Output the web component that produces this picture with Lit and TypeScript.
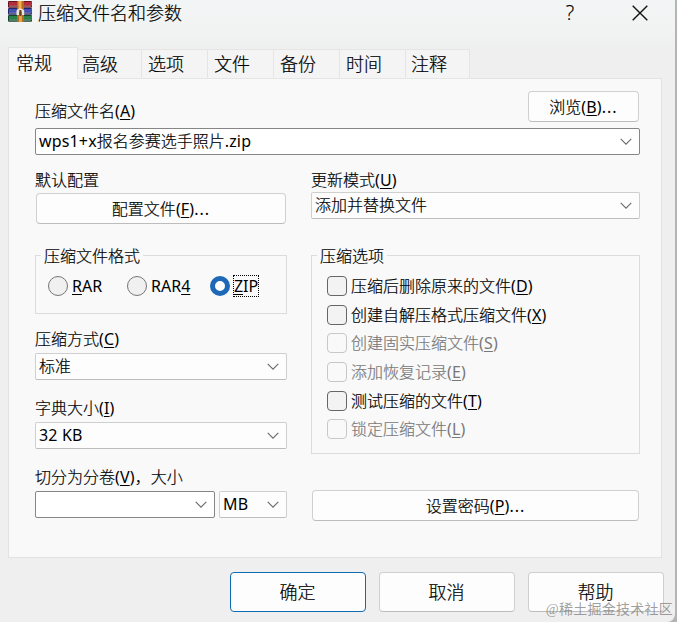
import { LitElement, html, css, svg, nothing } from "lit";
import { customElement, property } from "lit/decorators.js";
import { classMap } from "lit/directives/class-map.js";

const keyed = (text: string, key?: string, tail = "") =>
  html`${text}${key ? html`<span class="latin">(<u>${key}</u>)</span>` : nothing}${tail === "..." ? html`<span class="latin dots">...</span>` : tail}`;

const latinRuns = (text: string) =>
  text.split(/([\x20-\x7e]+)/).filter(Boolean).map((run) => /^[\x20-\x7e]/.test(run) ? html`<span class="latin">${run}</span>` : run);

const latinStyles = css`
  .latin { font-weight: 400; -webkit-text-stroke: 0; letter-spacing: .15px; }
  .dots { letter-spacing: 1px; }
`;

@customElement("combo-box")
class ComboBox extends LitElement {
  @property() value = "";
  @property({ type: Boolean }) editable = false;

  static styles = [latinStyles, css`
    :host { display: block; }
    .box {
      box-sizing: border-box; height: 27px; display: flex; align-items: center;
      justify-content: space-between; padding: 0 7px 0 3px; background: #fdfdfd;
      border: 1px solid #cfcfcf; border-bottom-color: #bdbdbd; border-radius: 2px;
      line-height: 25px; white-space: nowrap;
    }
    .editable { border-color: #868686; background: #fff; }
    svg { width: 12px; height: 7px; flex: none; }
    path { fill: none; stroke: #6a6a6a; stroke-width: 1.1; }
  `];

  render() {
    return html`<div class=${classMap({ box: true, editable: this.editable })}>
      <span>${latinRuns(this.value)}</span>
      <svg viewBox="0 0 12 7"><path d="M.7 .8 6 6.1 11.3 .8" /></svg>
    </div>`;
  }
}

@customElement("app-root")
class AppRoot extends LitElement {
  static styles = [latinStyles, css`
    * { box-sizing: border-box; }
    :host {
      display: block; width: 677px; height: 622px; overflow: hidden; background: #b4b4b4;
      font: 300 16px/24px "Noto Sans", "Noto Sans CJK SC", sans-serif; color: #000;
      -webkit-text-stroke: .2px;
    }
    u { text-decoration-thickness: 1px; text-underline-offset: 2px; text-decoration-skip-ink: none; }
    .window {
      position: relative; width: 675px; height: 622px; border-radius: 0 0 8px 0;
      background: linear-gradient(#f2f5f5 0, #f2f4f4 24px, #efefef 50px);
    }
    .titlebar { display: flex; align-items: center; height: 26px; padding: 0 27px 0 8px; font-size: 18px; font-family: "Noto Sans CJK SC", sans-serif; }
    .logo { width: 24px; height: 21px; margin: -3px 6px 0 0; }
    .title { flex: 1; margin-top: -2px; }
    .help { width: 10px; margin-right: 57px; text-align: center; font: 300 20px/24px "Open Sans", sans-serif; }
    .close { width: 16px; height: 16px; }
    .close path { fill: none; stroke: #111; stroke-width: 1.4; }
    .tabs { display: flex; align-items: flex-end; height: 53px; padding-left: 8px; margin-bottom: -1px; font: 300 18px/28px "Noto Sans CJK SC", sans-serif; }
    .tab { width: 66px; height: 30px; padding-left: 6px; line-height: 27px; background: #f4f4f4; border: 1px solid #e5e5e5; border-left: 0; }
    .tab:nth-child(2) { width: 64px; padding-left: 4px; }
    .tab.last { width: 64px; padding-left: 5px; }
    .tab.active { position: relative; width: 70px; height: 32px; padding-left: 7px; line-height: 28px; background: #f9f9f9; border-left: 1px solid #e5e5e5; border-bottom: 0; }
    .panel { width: 654px; height: 480px; margin-left: 8px; padding: 12px 21px 0 26px; background: #f9f9f9; border: 1px solid #e2e2e2; }
    .namerow { display: flex; justify-content: space-between; height: 37px; padding-right: 1px; }
    .namerow .label { margin-top: 8px; }
    .label { height: 24px; white-space: nowrap; }
    .button {
      display: flex; align-items: center; justify-content: center; height: 31px;
      border: 1px solid #d0d0d0; border-bottom-color: #bdbdbd; border-radius: 4px; background: #fdfdfd;
    }
    .browse { width: 111px; }
    .columns { display: flex; justify-content: space-between; padding-top: 13px; }
    .left { width: 252px; }
    .right { width: 329px; }
    .profile { margin: 1px 1px 31px 1px; }
    .group { border: 1px solid #dcdcdc; }
    .legend { width: max-content; height: 24px; margin: -12px 0 0 5px; padding: 0 3px; background: #f9f9f9; }
    .formats { height: 59px; margin-bottom: 13px; }
    .radios { display: flex; align-items: center; height: 24px; margin: 6px 0 0 12px; font-weight: 400; -webkit-text-stroke: 0; }
    .radio { width: 20px; height: 20px; margin-right: 4px; border: 1px solid #757575; border-radius: 50%; background: #f0f0f0; }
    .radio.on { border: 5px solid #1d69b8; background: #fff; margin-right: 3px; }
    .rar { width: 55px; }
    .rar4 { width: 59px; }
    .focused { height: 22px; line-height: 20px; width: 26px; border: 1px dotted #000; display: flex; justify-content: center; }
    .method { margin: 2px 0 16px; }
    .sizes { display: flex; gap: 4px; }
    .volume { width: 180px; }
    .unit { width: 68px; }
    .options { height: 199px; margin: 36px 0; }
    .choices { margin: 4px 0 0 15px; }
    .choice { display: flex; align-items: center; height: 28.6px; }
    .check { width: 20px; height: 20px; margin-right: 4px; border: 1px solid #666; border-radius: 4px; background: #f3f3f3; }
    .disabled { color: #787878; }
    .disabled .check { border-color: #c8c8c8; background: #f9f9f9; }
    .password { margin: 0 1px; }
    .actions { display: flex; justify-content: flex-end; gap: 13px; padding: 14px 11px 0 0; font: 300 18px/28px "Noto Sans CJK SC", sans-serif; }
    .actions .button { width: 136px; height: 40px; padding: 0 1px 2px 0; }
    .actions .primary { border-color: #0f6cb3; }
    .watermark {
      position: absolute; right: 2px; bottom: 0; white-space: nowrap; color: rgba(110, 110, 110, .66);
      font: 14px/24px "Liberation Serif", "Noto Sans CJK SC", serif; letter-spacing: .25px; -webkit-text-stroke: 0;
    }
  `];

  private options = [
    { text: "压缩后删除原来的文件", key: "D" },
    { text: "创建自解压格式压缩文件", key: "X" },
    { text: "创建固实压缩文件", key: "S", disabled: true },
    { text: "添加恢复记录", key: "E", disabled: true },
    { text: "测试压缩的文件", key: "T" },
    { text: "锁定压缩文件", key: "L", disabled: true },
  ];

  private logo() {
    const book = (y: number, fill: string, dark: string) => svg`
      <rect x="0" y=${y} width="24" height="6.8" rx="1" fill=${dark} />
      <rect x="1" y=${y + 1} width="23" height="4" fill=${fill} />
      <rect x="1" y=${y + 4.8} width="22" height=".7" fill="#a9a6a4" />`;
    return html`<svg class="logo" viewBox="0 0 24 21">
      ${book(0, "#b52c3c", "#671421")}${book(7, "#4350b5", "#232967")}${book(14, "#27834a", "#12452b")}
      <rect x="9" width="7" height="21" fill="#b66a24" />
      <rect x="10.5" width="3" height="8" fill="#f0b34c" />
      <rect x="11" y="14" width="3" height="7" fill="#e2a344" />
      <path d="M8.5 14V9.5Q12.3 5.5 16.2 9.5V14H13.8V10.5H11V14Z" fill="#eee6d5" />
      <rect x="11.4" y="9" width="2" height="6" fill="#6c411d" />
    </svg>`;
  }

  render() {
    const tabs = ["常规", "高级", "选项", "文件", "备份", "时间", "注释"];
    return html`<div class="window">
      <div class="titlebar">
        ${this.logo()}
        <span class="title">压缩文件名和参数</span>
        <span class="help">?</span>
        <svg class="close" viewBox="0 0 16 16"><path d="M.7 .7 15.3 15.3M15.3 .7 .7 15.3" /></svg>
      </div>
      <div class="tabs">
        ${tabs.map((t, i) => html`<div class=${classMap({ tab: true, active: i === 0, last: i === 6 })}>${t}</div>`)}
      </div>
      <div class="panel">
        <div class="namerow">
          <div class="label">${keyed("压缩文件名", "A")}</div>
          <div class="button browse"><span>${keyed("浏览", "B", "...")}</span></div>
        </div>
        <combo-box editable value="wps1+x报名参赛选手照片.zip"></combo-box>
        <div class="columns">
          <div class="left">
            <div class="label">默认配置</div>
            <div class="button profile"><span>${keyed("配置文件", "F", "...")}</span></div>
            <div class="group formats">
              <div class="legend">压缩文件格式</div>
              <div class="radios">
                <span class="radio"></span><span class="rar"><u>R</u>AR</span>
                <span class="radio"></span><span class="rar4">RAR<u>4</u></span>
                <span class="radio on"></span><span class="focused"><span><u>Z</u>IP</span></span>
              </div>
            </div>
            <div class="label">${keyed("压缩方式", "C")}</div>
            <combo-box class="method" value="标准"></combo-box>
            <div class="label">${keyed("字典大小", "I")}</div>
            <combo-box class="method" value="32 KB"></combo-box>
            <div class="label">${keyed("切分为分卷", "V", "，大小")}</div>
            <div class="sizes method">
              <combo-box class="volume" editable></combo-box>
              <combo-box class="unit" value="MB"></combo-box>
            </div>
          </div>
          <div class="right">
            <div class="label">${keyed("更新模式", "U")}</div>
            <combo-box value="添加并替换文件"></combo-box>
            <div class="group options">
              <div class="legend">压缩选项</div>
              <div class="choices">
                ${this.options.map((o) => html`<div class=${classMap({ choice: true, disabled: !!o.disabled })}>
                  <span class="check"></span><span>${keyed(o.text, o.key)}</span>
                </div>`)}
              </div>
            </div>
            <div class="button password"><span>${keyed("设置密码", "P", "...")}</span></div>
          </div>
        </div>
      </div>
      <div class="actions">
        <div class="button primary">确定</div>
        <div class="button">取消</div>
        <div class="button">帮助</div>
      </div>
      <div class="watermark">@稀土掘金技术社区</div>
    </div>`;
  }
}
